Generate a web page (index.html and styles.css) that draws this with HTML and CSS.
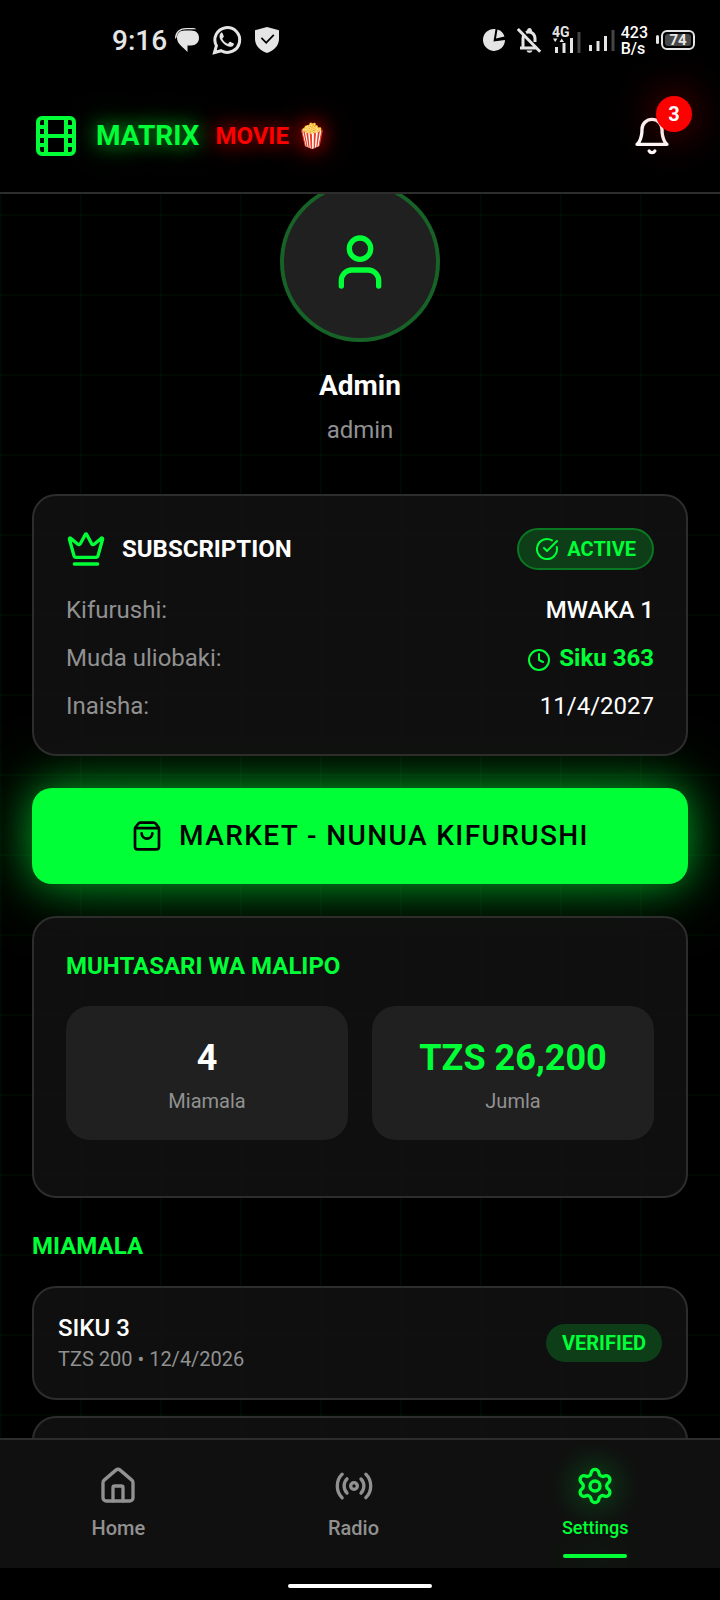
FILE: index.html
```html
<!DOCTYPE html>
<html lang="sw">
<head>
<meta charset="utf-8">
<meta name="viewport" content="width=device-width, initial-scale=1">
<title>Matrix Movie</title>
<link rel="stylesheet" href="styles.css">
</head>
<body>
<div class="status">
  <div class="status-left">
    <span class="time">9:16</span>
    <svg class="fill" width="24" height="24" viewBox="0 0 24 24"><path d="M0 11C0 4 4 0 11 0h6c2 0 3.500 .5 4.500 1.300H11C5.500 1.300 2.500 4 1.500 9.500z"/><path d="M9.500 2.500H16c5 0 8 2.800 8 7.300 0 4.700-3 7.700-8 7.700h-3.500V24C8 19 2 16 2 9.800 2 5.300 5 2.500 9.500 2.500z"/></svg>
    <svg width="28" height="28" viewBox="0 0 28 28"><path class="line" d="M1.500 26.500l1.900-6.700a12.400 12.400 0 1 1 4.800 4.900z"/><path class="fill" d="M9.600 7.300c-.4-.8-1.200-.9-1.800-.3C5 10 7.300 14.300 10.300 17.300c3.300 3.200 7.500 5 10 2.100.8-1 .7-1.800 0-2.200l-2.700-1.300c-.6-.3-1-.1-1.400.4l-.9 1.200c-.4.4-.8.4-1.300.1-1.900-.9-3.500-2.400-4.500-4.300-.3-.5-.1-.8.3-1.200l.8-1c.3-.4.3-.8.100-1.200z"/></svg>
    <svg class="fill" width="24" height="26" viewBox="0 0 24 26"><path fill-rule="evenodd" d="M12 0l12 3.300V12c0 6.500-5 11.500-12 14C5 23.500 0 18.500 0 12V3.300zM7 10.300l-1.200 1.200 5.400 5.400 8.200-8.400-1.200-1.200-7 7.200z"/></svg>
  </div>
  <div class="status-right">
    <svg class="fill" width="22" height="22" viewBox="0 0 22 22"><path d="M12.500 0A11 11 0 1 0 22 11L10.500 12.500z"/><path d="M14.500 .5l-1.500 9L21.500 7.500A11 11 0 0 0 14.500 .5z"/></svg>
    <svg class="bell-off" width="24" height="25" viewBox="0 0 24 25"><path class="line" d="M.8 1l22.400 22.700M3 20h16M6 19v-8.500c0-1.500.4-2.700 1-3.700M9 4.500c4.500-2 9 1.300 9 6V14"/><path class="fill" d="M10 3c0-4 5-4 5 0zM9.500 22.500h6c-1 3-5 3-6 0z"/></svg>
    <svg class="fill signal-data" width="28" height="27" viewBox="0 0 28 27"><path d="M2 20h3v6H2zM9.500 16h3v10h-3zM17 11h3v15h-3z"/><path opacity=".3" d="M24.500 5h3v21h-3z"/><path d="M0 11.500h4.500L2.200 15zM6.500 15H11L8.700 11.500z"/><text x="-1" y="10" class="tiny">4G</text></svg>
    <svg class="fill signal" width="26" height="21" viewBox="0 0 26 21"><path d="M0 15h3v6H0zM7.500 11h3v10h-3zM15 6h3v15h-3z"/><path opacity=".3" d="M22.500 0h3v21h-3z"/></svg>
    <span class="speed">423<br>B/s</span>
    <span class="battery"><span class="battery-level">74</span></span>
  </div>
</div>

<header class="header">
  <svg class="icon brand-icon" width="48" height="48" viewBox="0 0 24 24"><rect width="18" height="18" x="3" y="3" rx="2"/><path d="M7 3v18M3 7.500h4M3 12h18M3 16.500h4M17 3v18M17 7.500h4M17 16.500h4"/></svg>
  <h1 class="brand"><span class="brand-main">MATRIX</span><span class="brand-sub">MOVIE<span>🍿</span></span></h1>
  <button class="bell" type="button" aria-label="Notifications">
    <svg class="icon" width="40" height="40" viewBox="0 0 24 24"><path d="M6 8a6 6 0 0 1 12 0c0 7 3 9 3 9H3s3-2 3-9M10.300 21a1.940 1.940 0 0 0 3.400 0"/></svg>
    <span class="bell-count">3</span>
  </button>
</header>

<main class="main">
  <section class="profile">
    <div class="avatar"><svg class="icon" width="64" height="64" viewBox="0 0 24 24"><path d="M19 21v-2a4 4 0 0 0-4-4H9a4 4 0 0 0-4 4v2"/><circle cx="12" cy="7" r="4"/></svg></div>
    <h2 class="name">Admin</h2>
    <p class="role">admin</p>
  </section>

  <section class="card">
    <div class="card-head">
      <svg class="icon green" width="40" height="40" viewBox="0 0 24 24"><path d="M11.562 3.266a.5.5 0 0 1 .876 0L15.390 8.870a1 1 0 0 0 1.516.294L21.183 5.500a.5.5 0 0 1 .798.519l-2.834 10.246a1 1 0 0 1-.956.734H5.810a1 1 0 0 1-.957-.734L2.020 6.020a.5.5 0 0 1 .798-.519l4.276 3.664a1 1 0 0 0 1.516-.294zM5 21h14"/></svg>
      <h3 class="title">SUBSCRIPTION</h3>
      <span class="badge badge-outline"><svg class="icon" width="24" height="24" viewBox="0 0 24 24"><path d="M21.801 10A10 10 0 1 1 17 3.335"/><path d="m9 11 3 3L22 4"/></svg>ACTIVE</span>
    </div>
    <dl class="facts">
      <div class="fact"><dt>Kifurushi:</dt><dd class="medium">MWAKA 1</dd></div>
      <div class="fact"><dt>Muda uliobaki:</dt><dd class="left-days"><svg class="icon" width="24" height="24" viewBox="0 0 24 24"><circle cx="12" cy="12" r="10"/><path d="M12 6v6l4 2"/></svg>Siku 363</dd></div>
      <div class="fact"><dt>Inaisha:</dt><dd>11/4/2027</dd></div>
    </dl>
  </section>

  <button class="market" type="button">
    <svg class="icon" width="32" height="32" viewBox="0 0 24 24"><path d="M16 10a4 4 0 0 1-8 0M3.103 6.034h17.794"/><path d="M3.400 5.467a2 2 0 0 0-.4 1.200V20a2 2 0 0 0 2 2h14a2 2 0 0 0 2-2V6.667a2 2 0 0 0-.4-1.200l-2-2.667A2 2 0 0 0 17 2H7a2 2 0 0 0-1.600.8z"/></svg>
    MARKET - NUNUA KIFURUSHI
  </button>

  <section class="card">
    <h3 class="title green">MUHTASARI WA MALIPO</h3>
    <div class="stats">
      <div class="stat"><strong class="stat-value">4</strong><span class="stat-label">Miamala</span></div>
      <div class="stat"><strong class="stat-value green">TZS 26,200</strong><span class="stat-label">Jumla</span></div>
    </div>
  </section>

  <section class="history">
    <h3 class="title green">MIAMALA</h3>
    <ul class="list">
      <li class="card item">
        <div><p class="item-name">SIKU 3</p><p class="item-meta">TZS 200 • 12/4/2026</p></div>
        <span class="badge">VERIFIED</span>
      </li>
      <li class="card item item-next"></li>
    </ul>
  </section>
</main>

<nav class="nav">
  <a class="tab" href="#home"><svg class="icon" width="40" height="40" viewBox="0 0 24 24"><path d="M15 21v-8a1 1 0 0 0-1-1h-4a1 1 0 0 0-1 1v8"/><path d="M3 10a2 2 0 0 1 .709-1.528l7-5.999a2 2 0 0 1 2.582 0l7 5.999A2 2 0 0 1 21 10v9a2 2 0 0 1-2 2H5a2 2 0 0 1-2-2z"/></svg>Home</a>
  <a class="tab" href="#radio"><svg class="icon" width="40" height="40" viewBox="0 0 24 24"><path d="M4.900 19.100C1 15.200 1 8.800 4.900 4.900M7.800 16.200c-2.300-2.300-2.300-6.100 0-8.500M16.200 7.800c2.300 2.300 2.300 6.100 0 8.500M19.100 4.900C23 8.800 23 15.100 19.100 19"/><circle cx="12" cy="12" r="2"/></svg>Radio</a>
  <a class="tab tab-active" href="#settings" aria-current="page"><svg class="icon" width="40" height="40" viewBox="0 0 24 24"><path d="M9.671 4.136a2.340 2.340 0 0 1 4.659 0 2.340 2.340 0 0 0 3.319 1.915 2.340 2.340 0 0 1 2.330 4.033 2.340 2.340 0 0 0 0 3.831 2.340 2.340 0 0 1-2.330 4.033 2.340 2.340 0 0 0-3.319 1.915 2.340 2.340 0 0 1-4.659 0 2.340 2.340 0 0 0-3.320-1.915 2.340 2.340 0 0 1-2.330-4.033 2.340 2.340 0 0 0 0-3.831A2.340 2.340 0 0 1 6.350 6.051a2.340 2.340 0 0 0 3.319-1.915"/><circle cx="12" cy="12" r="3"/></svg>Settings</a>
</nav>
<div class="gesture"></div>
</body>
</html>
```

FILE: styles.css
```css
* {
  box-sizing: border-box;
  margin: 0;
  padding: 0;
}

:root {
  --green: #00ff37;
  --red: #ff0000;
  --muted: #919191;
  --line: #2d2d2d;
}

body {
  display: flex;
  flex-direction: column;
  height: 100vh;
  overflow: hidden;
  background: #000;
  color: #fff;
  font: 24px/32px Roboto, "Noto Color Emoji", sans-serif;
}

button {
  border: 0;
  background: none;
  color: inherit;
  font: inherit;
}

svg {
  display: block;
  flex: none;
  overflow: visible;
}

.icon {
  fill: none;
  stroke: currentColor;
  stroke-width: 2;
  stroke-linecap: round;
  stroke-linejoin: round;
}

.green {
  color: var(--green);
}

/* Status bar */
.status {
  display: flex;
  justify-content: space-between;
  align-items: center;
  height: 80px;
  padding: 0 25px 0 112px;
  color: #e5e5e5;
}

.status-left,
.status-right {
  display: flex;
  align-items: center;
}

.status-left {
  gap: 14px;
}

.status-right {
  gap: 8px;
}

.status .fill {
  fill: #e5e5e5;
}

.status .line {
  fill: none;
  stroke: #e5e5e5;
  stroke-width: 3;
}

.time {
  margin-right: -6px;
  padding-top: 2px;
  font-size: 28px;
  font-weight: 500;
}

.bell-off {
  margin: 0 4px;
}

.signal {
  margin-right: -2px;
}

.tiny {
  font-size: 14px;
  font-weight: 700;
}

.speed {
  padding-top: 2px;
  color: #fff;
  font-size: 16px;
  font-weight: 500;
  line-height: 16px;
}

.battery {
  position: relative;
  display: block;
  width: 34px;
  height: 20px;
  margin-left: 5px;
  padding: 2px;
  border: 2px solid #e5e5e5;
  border-radius: 6px;
}

.battery::before {
  content: "";
  position: absolute;
  top: 3px;
  left: -7px;
  width: 3px;
  height: 9px;
  border-radius: 2px;
  background: #e5e5e5;
}

.battery-level {
  display: block;
  border-radius: 3px;
  background: #484848;
  font-size: 15px;
  font-weight: 700;
  line-height: 12px;
  text-align: center;
}

/* Header */
.header {
  position: relative;
  z-index: 2;
  display: flex;
  align-items: center;
  gap: 16px;
  padding: 20px 32px;
  border-bottom: 2px solid var(--line);
  background: #000;
}

.brand-icon {
  color: var(--green);
}

.brand {
  display: flex;
  flex: 1;
  align-items: center;
  gap: 16px;
  font-weight: 700;
}

.brand-main {
  color: var(--green);
  font-size: 28px;
  text-shadow: 0 0 20px rgba(0, 255, 55, 0.8), 0 0 40px rgba(0, 255, 55, 0.3);
}

.brand-sub {
  display: flex;
  gap: 8px;
  color: var(--red);
  font-size: 24px;
  text-shadow: 0 0 20px rgba(255, 0, 0, 0.8), 0 0 40px rgba(255, 0, 0, 0.3);
}

.bell {
  position: relative;
  padding: 16px;
}

.bell-count {
  position: absolute;
  top: -4px;
  right: -4px;
  width: 36px;
  height: 36px;
  border-radius: 50%;
  background: var(--red);
  box-shadow: 0 0 40px rgba(255, 0, 0, 0.4), 0 0 80px rgba(255, 0, 0, 0.2);
  font-size: 20px;
  font-weight: 700;
  line-height: 36px;
  text-align: center;
}

.main {
  flex: 1;
  min-height: 0;
  overflow: hidden;
  padding: 0 32px;
  background-color: #000;
  background-image:
    linear-gradient(rgba(0, 255, 55, 0.03) 2px, transparent 2px),
    linear-gradient(90deg, rgba(0, 255, 55, 0.03) 2px, transparent 2px);
  background-position: 0 20px;
  background-size: 80px 80px;
}

.profile {
  display: flex;
  flex-direction: column;
  align-items: center;
  margin: -12px 0 48px;
}

.avatar {
  display: grid;
  place-items: center;
  width: 160px;
  height: 160px;
  margin-bottom: 24px;
  border: 4px solid #166227;
  border-radius: 50%;
  background: #202020;
  color: var(--green);
}

.name {
  margin-bottom: 8px;
  font-size: 28px;
  line-height: 40px;
}

.role {
  color: var(--muted);
}

.card {
  position: relative;
  z-index: 1;
  padding: 32px;
  border: 2px solid var(--line);
  border-radius: 24px;
  background: rgba(18, 18, 18, 0.85);
}

.card-head {
  display: flex;
  align-items: center;
  gap: 16px;
  margin-bottom: 24px;
}

.title {
  flex: 1;
  font-size: 24px;
  font-weight: 700;
}

.badge {
  display: flex;
  align-items: center;
  gap: 8px;
  padding: 4px 16px;
  border-radius: 24px;
  background: #0d3e18;
  color: var(--green);
  font-size: 20px;
  font-weight: 700;
  line-height: 30px;
}

.badge-outline {
  border: 2px solid #0a7722;
}

.facts {
  display: grid;
  gap: 16px;
}

.fact {
  display: flex;
  justify-content: space-between;
}

.fact dt {
  color: var(--muted);
}

.medium {
  font-weight: 500;
}

.left-days {
  color: var(--green);
  font-weight: 700;
}

.left-days .icon {
  display: inline-block;
  margin-right: 8px;
  vertical-align: middle;
}

.market {
  display: flex;
  align-items: center;
  justify-content: center;
  gap: 16px;
  width: 100%;
  margin: 32px 0;
  padding: 32px;
  border-radius: 20px;
  background: var(--green);
  box-shadow: 0 0 40px rgba(0, 255, 55, 0.5), 0 0 80px rgba(0, 255, 55, 0.3);
  color: #000;
  font-size: 28px;
  font-weight: 500;
  letter-spacing: 0.05em;
}

.stats {
  display: grid;
  grid-template-columns: 1fr 1fr;
  gap: 24px;
  margin: 24px 0;
}

.stat {
  display: flex;
  flex-direction: column;
  align-items: center;
  padding: 24px;
  border-radius: 24px;
  background: #202020;
}

.stat-value {
  font-size: 36px;
  line-height: 56px;
}

.stat-label {
  color: var(--muted);
  font-size: 20px;
  line-height: 30px;
}

.history {
  margin-top: 32px;
}

.list {
  display: grid;
  gap: 16px;
  margin-top: 24px;
  list-style: none;
}

.item {
  display: flex;
  align-items: center;
  justify-content: space-between;
  padding: 24px;
}

.item-name {
  font-weight: 500;
}

.item-meta {
  color: var(--muted);
  font-size: 20px;
  line-height: 30px;
}

.item-next {
  min-height: 114px;
}

/* Bottom navigation */
.nav {
  position: relative;
  z-index: 2;
  display: flex;
  align-items: flex-end;
  justify-content: space-around;
  padding: 26px 0;
  border-top: 2px solid var(--line);
  background: #101010;
  overflow: hidden;
}

.tab {
  position: relative;
  display: flex;
  flex-direction: column;
  align-items: center;
  gap: 8px;
  color: var(--muted);
  font-size: 20px;
  font-weight: 500;
  line-height: 28px;
  text-decoration: none;
}

.tab-active {
  color: var(--green);
  font-size: 18px;
}

.tab-active .icon {
  filter: drop-shadow(0 0 16px rgba(0, 255, 55, 0.7));
}

.tab-active::after {
  content: "";
  position: absolute;
  bottom: -16px;
  width: 64px;
  height: 4px;
  border-radius: 2px;
  background: var(--green);
  box-shadow: 0 0 40px rgba(0, 255, 55, 0.3);
}

.gesture {
  display: flex;
  justify-content: center;
  padding: 16px 0 12px;
  background: #000;
}

.gesture::before {
  content: "";
  width: 20%;
  height: 4px;
  border-radius: 2px;
  background: #fff;
}
```
